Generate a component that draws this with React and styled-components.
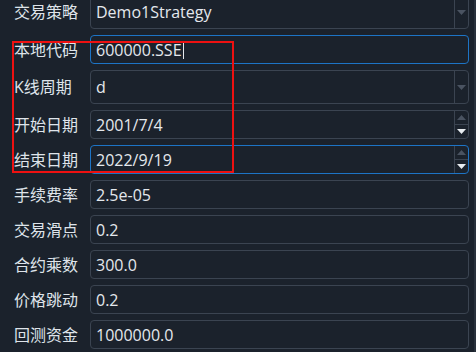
import React from 'react'
import styled, { createGlobalStyle } from 'styled-components'

const GlobalStyle = createGlobalStyle`
html, body {
    margin: 0;
    padding: 0;
    background-color: #1b222c;
    overflow: hidden;
}
`

const rows = [
    { label: '交易策略', value: 'Demo1Strategy', kind: 'combo' },
    { label: '本地代码', value: '600000.SSE', kind: 'line', focus: true, caret: true },
    { label: 'K线周期', value: 'd', kind: 'combo' },
    { label: '开始日期', value: '2001/7/4', kind: 'spin' },
    { label: '结束日期', value: '2022/9/19', kind: 'spin', focus: true },
    { label: '手续费率', value: '2.5e-05', kind: 'line' },
    { label: '交易滑点', value: '0.2', kind: 'line' },
    { label: '合约乘数', value: '300.0', kind: 'line' },
    { label: '价格跳动', value: '0.2', kind: 'line' },
    { label: '回测资金', value: '1000000.0', kind: 'line' },
]

function Arrow({ up, light }) {
    return (
        <svg width="9" height="5" viewBox="0 0 9 5">
            <polygon
                points={up ? '0,5 9,5 4.5,0' : '0,0 9,0 4.5,5'}
                fill={light ? '#e8ecf0' : '#4a5361'}
            />
        </svg>
    )
}

function Field({ row }) {
    return (
        <Box $kind={row.kind} $focus={row.focus}>
            <Value>
                {row.value}
                {row.caret && <Caret />}
            </Value>
            {row.kind === 'combo' && (
                <SideButton>
                    <Arrow />
                </SideButton>
            )}
            {row.kind === 'spin' && (
                <SpinButtons>
                    <SpinHalf><Arrow up /></SpinHalf>
                    <SpinHalf $bottom><Arrow light /></SpinHalf>
                </SpinButtons>
            )}
        </Box>
    )
}

function App() {
    return (
        <Page>
            <GlobalStyle />
            <Form>
                {rows.map((row) => (
                    <React.Fragment key={row.label}>
                        <Label>{row.label}</Label>
                        <Field row={row} />
                    </React.Fragment>
                ))}
                <Marker />
            </Form>
        </Page>
    )
}

const Page = styled.div`
width: 476px;
height: 352px;
box-sizing: border-box;
border-right: 2px solid #29313c;
overflow: hidden;
font-family: "Open Sans", "Noto Sans CJK SC", sans-serif;
color: #dfe4ea;
`

const Form = styled.div`
position: relative;
display: grid;
grid-template-columns: 70px 1fr;
column-gap: 6px;
row-gap: 6px;
align-items: center;
margin-top: -5px;
padding: 0 5px 0 14px;
`

const Label = styled.div`
font-size: 16px;
line-height: 20px;
white-space: nowrap;
`

const Box = styled.div`
display: flex;
align-items: stretch;
height: ${(p) => (p.$kind === 'combo' ? '34px' : '29px')};
box-sizing: border-box;
border: 1px solid ${(p) => (p.$focus ? '#1d74c6' : '#3b4451')};
border-radius: 4px;
background-color: #1b222c;
`

const Value = styled.div`
flex: 1;
display: flex;
align-items: center;
padding-left: 5px;
font-size: 16px;
color: #e4e8ed;
`

const Caret = styled.span`
display: inline-block;
width: 1px;
height: 18px;
margin-left: 1px;
background-color: #e4e8ed;
`

const SideButton = styled.div`
width: 13px;
display: flex;
align-items: center;
justify-content: center;
border-left: 1px solid #3b4451;
`

const SpinButtons = styled.div`
width: 13px;
display: flex;
flex-direction: column;
border-left: 1px solid #3b4451;
`

const SpinHalf = styled.div`
flex: 1;
display: flex;
align-items: center;
justify-content: center;
border-top: ${(p) => (p.$bottom ? '1px solid #3b4451' : 'none')};
`

const Marker = styled.div`
position: absolute;
left: 12px;
top: 46px;
box-sizing: border-box;
width: 222px;
height: 132px;
border: 2px solid #ee1111;
pointer-events: none;
`

export default App
